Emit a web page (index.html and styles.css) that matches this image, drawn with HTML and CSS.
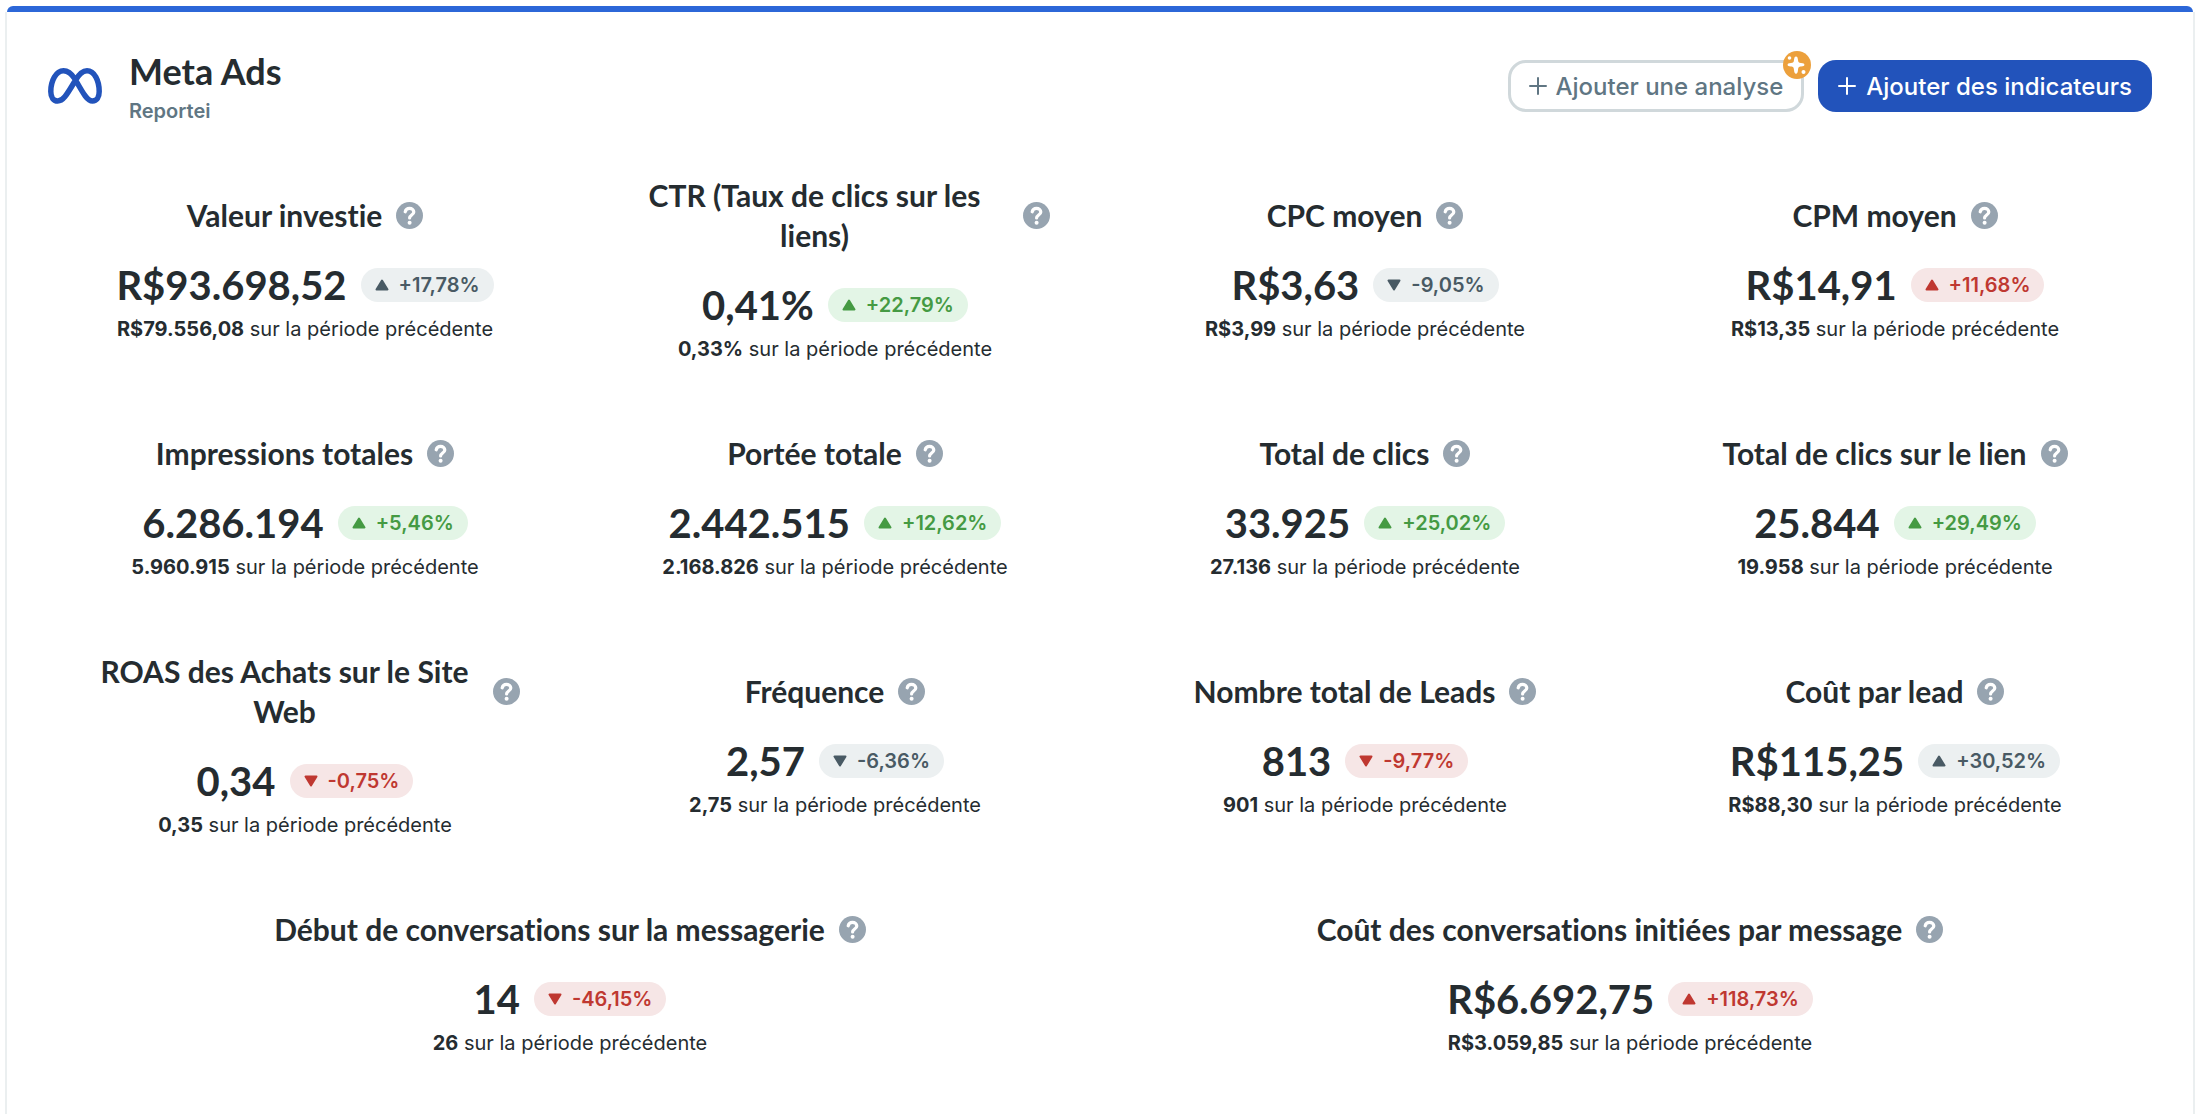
FILE: index.html
```html
<!DOCTYPE html>
<html lang="fr">
<head>
    <meta charset="UTF-8">
    <meta name="viewport" content="width=device-width, initial-scale=1.0">
    <title>Meta Ads</title>
    <link rel="stylesheet" href="styles.css">
</head>
<body>
    <svg class="sprite" aria-hidden="true">
        <symbol id="help" viewBox="0 0 27 27">
            <circle cx="13.5" cy="13.5" r="13.5" fill="#97a4b0"/>
            <path d="M9.2 9.8C9.700 7.600 11.200 6.400 13.500 6.400c2.500 0 4.300 1.500 4.300 3.600 0 3-4.200 3.100-4.200 6" fill="none" stroke="#fff" stroke-width="3.200" stroke-linecap="round"/>
            <circle cx="13.600" cy="20.800" r="2" fill="#fff"/>
        </symbol>
        <symbol id="arrow" viewBox="0 0 14 12">
            <path d="M7 1.5 12.5 10.5H1.5Z" fill="currentColor" stroke="currentColor" stroke-width="2" stroke-linejoin="round"/>
        </symbol>
        <symbol id="plus" viewBox="0 0 18 18">
            <path d="M9 1v16M1 9h16" stroke="currentColor" stroke-width="2" stroke-linecap="round"/>
        </symbol>
    </svg>

    <div class="top-bar"></div>
    <main class="card">
        <header class="card-header">
            <svg class="logo" viewBox="0 0 54 36" aria-hidden="true">
                <path d="M27 11C23 5 19.500 2.800 15.500 2.800 8 2.800 2.800 13 2.800 23.500c0 6 2.700 9.500 7 9.500 5 0 8-4.500 17.200-20C31 6 34.500 2.800 39 2.800c7.500 0 12.200 10 12.200 20.700 0 6-2.500 9.500-6.700 9.500C39.500 33 36 27 27 11Z" fill="none" stroke="#2253bb" stroke-width="5.500"/>
            </svg>
            <div class="heading">
                <h1>Meta Ads</h1>
                <p>Reportei</p>
            </div>
            <div class="actions">
                <button type="button" class="btn btn-outline">
                    <svg class="plus"><use href="#plus"/></svg>Ajouter une analyse
                    <svg class="spark" viewBox="0 0 28 28">
                        <circle cx="14" cy="14" r="14" fill="#eca03c"/>
                        <path d="M13 5.500c1.300 0 1.700 1 2 3.500.3 2.300.7 2.700 3 3 2.500.3 3.400.7 3.400 1.800s-.9 1.500-3.400 1.800c-2.300.3-2.700.7-3 3.300-.3 2.500-.7 3.800-2 3.800s-1.700-1.300-2-3.800c-.3-2.600-.7-3-3-3.300-2.500-.3-3.400-.7-3.400-1.800s.9-1.500 3.400-1.800c2.300-.3 2.700-.7 3-3 .3-2.500.7-3.500 2-3.500Z" fill="#fff"/>
                        <circle cx="6.500" cy="7" r="1.800" fill="#fff"/>
                        <circle cx="20.500" cy="21" r="2" fill="#fff"/>
                    </svg>
                </button>
                <button type="button" class="btn btn-primary">
                    <svg class="plus"><use href="#plus"/></svg>Ajouter des indicateurs
                </button>
            </div>
        </header>

        <section class="metrics">
            <article class="metric">
                <div class="metric-title"><h2>Valeur investie</h2><svg class="help"><use href="#help"/></svg></div>
                <div class="metric-value"><span>R$93.698,52</span><span class="badge neutral"><svg class="arrow"><use href="#arrow"/></svg>+17,78%</span></div>
                <p><b>R$79.556,08</b> sur la période précédente</p>
            </article>
            <article class="metric">
                <div class="metric-title"><h2>CTR (Taux de clics sur les liens)</h2><svg class="help"><use href="#help"/></svg></div>
                <div class="metric-value"><span>0,41%</span><span class="badge good"><svg class="arrow"><use href="#arrow"/></svg>+22,79%</span></div>
                <p><b>0,33%</b> sur la période précédente</p>
            </article>
            <article class="metric">
                <div class="metric-title"><h2>CPC moyen</h2><svg class="help"><use href="#help"/></svg></div>
                <div class="metric-value"><span>R$3,63</span><span class="badge neutral"><svg class="arrow down"><use href="#arrow"/></svg>-9,05%</span></div>
                <p><b>R$3,99</b> sur la période précédente</p>
            </article>
            <article class="metric">
                <div class="metric-title"><h2>CPM moyen</h2><svg class="help"><use href="#help"/></svg></div>
                <div class="metric-value"><span>R$14,91</span><span class="badge bad"><svg class="arrow"><use href="#arrow"/></svg>+11,68%</span></div>
                <p><b>R$13,35</b> sur la période précédente</p>
            </article>

            <article class="metric">
                <div class="metric-title"><h2>Impressions totales</h2><svg class="help"><use href="#help"/></svg></div>
                <div class="metric-value"><span>6.286.194</span><span class="badge good"><svg class="arrow"><use href="#arrow"/></svg>+5,46%</span></div>
                <p><b>5.960.915</b> sur la période précédente</p>
            </article>
            <article class="metric">
                <div class="metric-title"><h2>Portée totale</h2><svg class="help"><use href="#help"/></svg></div>
                <div class="metric-value"><span>2.442.515</span><span class="badge good"><svg class="arrow"><use href="#arrow"/></svg>+12,62%</span></div>
                <p><b>2.168.826</b> sur la période précédente</p>
            </article>
            <article class="metric">
                <div class="metric-title"><h2>Total de clics</h2><svg class="help"><use href="#help"/></svg></div>
                <div class="metric-value"><span>33.925</span><span class="badge good"><svg class="arrow"><use href="#arrow"/></svg>+25,02%</span></div>
                <p><b>27.136</b> sur la période précédente</p>
            </article>
            <article class="metric">
                <div class="metric-title"><h2>Total de clics sur le lien</h2><svg class="help"><use href="#help"/></svg></div>
                <div class="metric-value"><span>25.844</span><span class="badge good"><svg class="arrow"><use href="#arrow"/></svg>+29,49%</span></div>
                <p><b>19.958</b> sur la période précédente</p>
            </article>

            <article class="metric">
                <div class="metric-title"><h2>ROAS des Achats sur le Site Web</h2><svg class="help"><use href="#help"/></svg></div>
                <div class="metric-value"><span>0,34</span><span class="badge bad"><svg class="arrow down"><use href="#arrow"/></svg>-0,75%</span></div>
                <p><b>0,35</b> sur la période précédente</p>
            </article>
            <article class="metric">
                <div class="metric-title"><h2>Fréquence</h2><svg class="help"><use href="#help"/></svg></div>
                <div class="metric-value"><span>2,57</span><span class="badge neutral"><svg class="arrow down"><use href="#arrow"/></svg>-6,36%</span></div>
                <p><b>2,75</b> sur la période précédente</p>
            </article>
            <article class="metric">
                <div class="metric-title"><h2>Nombre total de Leads</h2><svg class="help"><use href="#help"/></svg></div>
                <div class="metric-value"><span>813</span><span class="badge bad"><svg class="arrow down"><use href="#arrow"/></svg>-9,77%</span></div>
                <p><b>901</b> sur la période précédente</p>
            </article>
            <article class="metric">
                <div class="metric-title"><h2>Coût par lead</h2><svg class="help"><use href="#help"/></svg></div>
                <div class="metric-value"><span>R$115,25</span><span class="badge neutral"><svg class="arrow"><use href="#arrow"/></svg>+30,52%</span></div>
                <p><b>R$88,30</b> sur la période précédente</p>
            </article>

            <article class="metric wide">
                <div class="metric-title"><h2>Début de conversations sur la messagerie</h2><svg class="help"><use href="#help"/></svg></div>
                <div class="metric-value"><span>14</span><span class="badge bad"><svg class="arrow down"><use href="#arrow"/></svg>-46,15%</span></div>
                <p><b>26</b> sur la période précédente</p>
            </article>
            <article class="metric wide">
                <div class="metric-title"><h2>Coût des conversations initiées par message</h2><svg class="help"><use href="#help"/></svg></div>
                <div class="metric-value"><span>R$6.692,75</span><span class="badge bad"><svg class="arrow"><use href="#arrow"/></svg>+118,73%</span></div>
                <p><b>R$3.059,85</b> sur la période précédente</p>
            </article>
        </section>
    </main>
</body>
</html>
```
FILE: styles.css
```css
* {
    box-sizing: border-box;
    margin: 0;
}
body {
    padding: 6px 7px 0 5px;
    background: #fff;
    color: #252c30;
    font-family: Inter, sans-serif;
    font-size: 20px;
    overflow: hidden;
}
.sprite {
    display: none;
}
.top-bar {
    height: 6px;
    margin: 0 2px;
    background: #2c67d8;
    border-radius: 12px 12px 0 0;
}
.card {
    padding-bottom: 40px;
    border: 2px solid #ebeff0;
    border-top: none;
}
.card-header {
    display: flex;
    align-items: center;
    height: 138px;
    padding: 10px 41px 0;
}
.logo {
    width: 54px;
    height: 36px;
    margin-right: 27px;
}
h1, h2, .metric-value {
    font-family: Lato, sans-serif;
    font-weight: 700;
    font-variant-ligatures: none;
}
h1 {
    font-size: 36px;
    line-height: 44px;
}
.heading {
    padding-top: 4px;
}
.heading p {
    margin-top: 2px;
    color: #607683;
    font-weight: 600;
    line-height: 32px;
}
.actions {
    display: flex;
    gap: 14px;
    margin-left: auto;
}
.btn {
    position: relative;
    display: flex;
    align-items: center;
    gap: 8px;
    height: 52px;
    padding: 0 20px;
    border: none;
    border-radius: 18px;
    font: 500 24px Inter, sans-serif;
    cursor: pointer;
}
.btn-outline {
    padding: 0 18px;
    background: #fff;
    border: 3px solid #d0d8db;
    color: #607683;
}
.btn-primary {
    gap: 10px;
    background: #2253bb;
    color: #fff;
}
.plus {
    width: 18px;
    height: 18px;
}
.spark {
    position: absolute;
    top: -12px;
    right: -10px;
    width: 28px;
    height: 28px;
}
.metrics {
    display: grid;
    grid-template-columns: repeat(4, 1fr);
    grid-auto-rows: minmax(238px, auto);
    padding: 0 33px;
}
.metric {
    display: flex;
    flex-direction: column;
    align-items: center;
    justify-content: center;
    padding: 0 50px;
}
.wide {
    grid-column: span 2;
}
.metric-title {
    display: flex;
    align-items: center;
    gap: 14px;
    margin-bottom: 26px;
    text-align: center;
}
h2 {
    font-size: 30px;
    line-height: 40px;
}
.help {
    flex: none;
    width: 27px;
    height: 27px;
}
.metric-value {
    display: flex;
    align-items: center;
    gap: 14px;
    font-size: 40px;
    line-height: 48px;
    margin-bottom: 6px;
}
.metric p {
    line-height: 28px;
}
.metric b {
    font-weight: 700;
}
.badge {
    display: flex;
    align-items: center;
    gap: 10px;
    height: 34px;
    padding: 0 14px;
    border-radius: 17px;
    font: 600 20px Inter, sans-serif;
}
.neutral {
    background: #ecf0f1;
    color: #495a64;
}
.good {
    background: #e3f5e6;
    color: #459a43;
}
.bad {
    background: #f6e6e6;
    color: #bf3831;
}
.arrow {
    width: 14px;
    height: 12px;
}
.down {
    transform: rotate(180deg);
}
```
